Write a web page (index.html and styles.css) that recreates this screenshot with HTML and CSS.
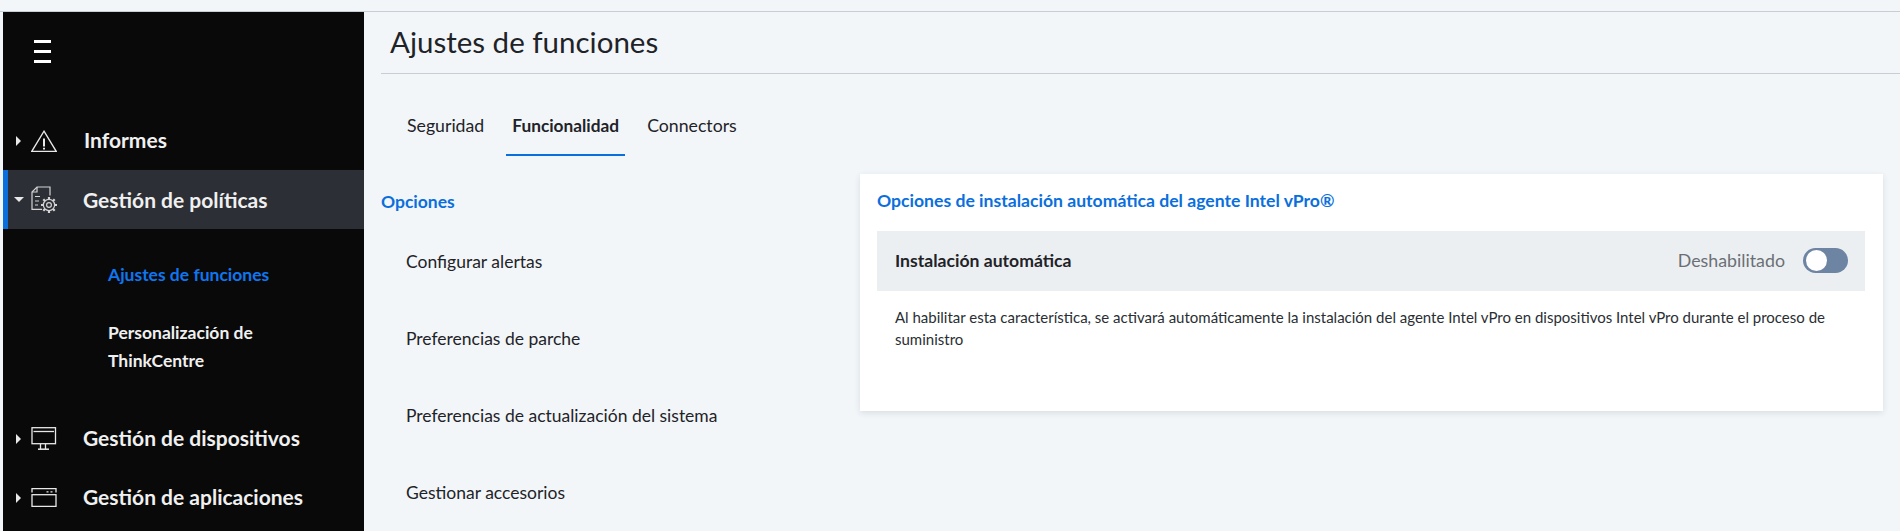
FILE: index.html
```html
<!DOCTYPE html>
<html lang="es">
<head>
  <meta charset="UTF-8">
  <title>Ajustes de funciones</title>
  <link rel="stylesheet" href="styles.css">
</head>
<body>
  <div class="topbar"></div>
  <div class="app">
    <!-- SIDEBAR -->
    <nav class="sidebar">
      <div class="burger"><span></span><span></span><span></span></div>

      <div class="nav-item nav-first">
        <span class="caret-right"></span>
        <svg class="nav-icon icon-alert" viewBox="0 0 26 22" fill="none" stroke="#e8e8e8" stroke-width="1.3">
          <path d="M13 1.200 L25.200 21.300 H0.800 Z"/>
          <path d="M13 8.500 V16.500" stroke-width="2"/>
          <path d="M13 17.800 V19.600" stroke-width="2"/>
        </svg>
        <span class="nav-label">Informes</span>
      </div>

      <div class="nav-item nav-active">
        <span class="caret-down"></span>
        <svg class="nav-icon icon-policy" viewBox="0 0 26 28" fill="none" stroke="#d4d4d4" stroke-width="1.2">
          <path d="M11 23.400 H1 V6 L6 1 H19 V9.500"/>
          <path d="M6 1 V6 H1"/>
          <path d="M4 10.500 H9 M4 15 H8 M4 19 H7"/>
          <circle cx="18" cy="19" r="2.400"/>
          <circle cx="18" cy="19" r="5.600"/>
          <path d="M18 11 V13.500 M18 24.500 V27 M10 19 H12.500 M23.500 19 H26 M12.300 13.300 L14 15 M22 23 L23.700 24.700 M23.700 13.300 L22 15 M14 23 L12.300 24.700" stroke-width="2.200"/>
        </svg>
        <span class="nav-label">Gestión de políticas</span>
      </div>

      <div class="subnav">
        <div class="sub-item sub-current">Ajustes de funciones</div>
        <div class="sub-item">Personalización de ThinkCentre</div>
      </div>

      <div class="nav-item nav-low">
        <span class="caret-right"></span>
        <svg class="nav-icon icon-device" viewBox="0 0 26 23" fill="none" stroke="#e8e8e8" stroke-width="1.300">
          <rect x="1" y="0.700" width="23.500" height="16"/>
          <path d="M2.500 4.500 H23"/>
          <path d="M9.500 17 V22 M14.500 17 V22" />
          <path d="M7 22.200 H18" stroke-width="1.500"/>
        </svg>
        <span class="nav-label">Gestión de dispositivos</span>
      </div>

      <div class="nav-item nav-low">
        <span class="caret-right"></span>
        <svg class="nav-icon icon-apps" viewBox="0 0 26 19" fill="none" stroke="#e8e8e8" stroke-width="1.300">
          <path d="M1 4.500 V0.700 H25 V4.500"/>
          <rect x="1" y="6.700" width="24" height="11.700"/>
          <path d="M15.500 3.800 H17.500 M19.500 3.800 H21.500"/>
        </svg>
        <span class="nav-label">Gestión de aplicaciones</span>
      </div>
    </nav>

    <!-- MAIN -->
    <main class="main">
      <h1 class="page-title">Ajustes de funciones</h1>

      <div class="tabs">
        <div class="tab">Seguridad</div>
        <div class="tab tab-active">Funcionalidad</div>
        <div class="tab">Connectors</div>
      </div>

      <div class="columns">
        <div class="options">
          <h2 class="options-title">Opciones</h2>
          <div class="option">Configurar alertas</div>
          <div class="option">Preferencias de parche</div>
          <div class="option">Preferencias de actualización del sistema</div>
          <div class="option">Gestionar accesorios</div>
        </div>

        <section class="card">
          <h2 class="card-title">Opciones de instalación automática del agente Intel vPro®</h2>
          <div class="setting-row">
            <span class="setting-name">Instalación automática</span>
            <span class="setting-state">Deshabilitado</span>
            <span class="switch"><span class="knob"></span></span>
          </div>
          <p class="setting-help">Al habilitar esta característica, se activará automáticamente la instalación del agente Intel vPro en dispositivos Intel vPro durante el proceso de suministro</p>
        </section>
      </div>
    </main>
  </div>
</body>
</html>
```

FILE: styles.css
```css
* { box-sizing: border-box; }
html, body {
  height: 531px;
  overflow: hidden;
}
body {
  margin: 0;
  background: #f2f6f9;
  color: #1f2328;
  font-family: 'Lato', sans-serif;
}
.topbar {
  height: 12px;
  border-bottom: 1px solid #c9ced6;
}
.app {
  display: flex;
  height: 519px;
  padding-left: 3px;
}
.sidebar {
  width: 361px;
  flex: none;
  background: #090909;
  color: #f0f0f0;
}
.burger {
  margin: 28px 0 0 31px;
  width: 17px;
  height: 23px;
  display: flex;
  flex-direction: column;
  justify-content: space-between;
}
.burger span {
  display: block;
  height: 3px;
  background: #fff;
}
.nav-item {
  display: flex;
  align-items: center;
  height: 59px;
  padding-left: 13px;
  font-size: 21px;
  font-weight: 700;
}
.nav-first { margin-top: 48px; }
.nav-active {
  background: #2c2f35;
  border-left: 5px solid #0a6fdc;
  padding-left: 6px;
}
.caret-right {
  flex: none;
  width: 0;
  height: 0;
  border-left: 5px solid #e8e8e8;
  border-top: 5px solid transparent;
  border-bottom: 5px solid transparent;
}
.caret-down {
  flex: none;
  width: 0;
  height: 0;
  margin-top: -1px;
  border-top: 5px solid #e8e8e8;
  border-left: 5px solid transparent;
  border-right: 5px solid transparent;
}
.nav-icon {
  flex: none;
  width: 26px;
  margin-left: 10px;
}
.icon-alert { height: 22px; }
.icon-policy {
  height: 28px;
  margin-left: 7px;
}
.icon-device { height: 23px; }
.icon-apps { height: 19px; }
.nav-label {
  margin-left: 27px;
  margin-top: -2px;
}
.nav-active .nav-label {
  margin-left: 26px;
  margin-top: 0;
}
.nav-low .nav-label { margin-left: 26px; }
.subnav {
  height: 180px;
  padding: 32px 60px 0 105px;
}
.sub-item {
  font-size: 17.5px;
  font-weight: 700;
  line-height: 28px;
  margin-bottom: 30px;
}
.sub-current { color: #0f76f0; }
.main {
  flex: 1;
  padding-left: 17px;
  min-width: 0;
}
.page-title {
  margin: 0;
  height: 62px;
  border-bottom: 1px solid #c9ced6;
  padding: 11px 0 0 9px;
  font-size: 29.5px;
  font-weight: 400;
  line-height: 38px;
}
.tabs {
  display: flex;
  gap: 16px;
  height: 82px;
  padding-left: 20px;
}
.tab {
  padding: 39px 6px 0;
  font-size: 17.7px;
  line-height: 26px;
}
.tab-active {
  font-size: 17.3px;
  font-weight: 700;
  border-bottom: 2px solid #0a6fdc;
}
.columns { display: flex; }
.options {
  width: 479px;
  flex: none;
}
.options-title {
  margin: 0 0 9px;
  padding-top: 34px;
  font-size: 17.5px;
  font-weight: 700;
  line-height: 24px;
  color: #0a6fdc;
}
.option {
  height: 77px;
  line-height: 77px;
  padding-left: 25px;
  font-size: 17.5px;
}
.card {
  width: 1023px;
  height: 237px;
  margin-top: 18px;
  background: #fff;
  box-shadow: 0 2px 6px rgba(30, 50, 70, 0.12);
  padding: 15px 18px 0 17px;
}
.card-title {
  margin: 0;
  font-size: 17.6px;
  font-weight: 700;
  line-height: 24px;
  color: #0a6fdc;
}
.setting-row {
  display: flex;
  align-items: center;
  height: 60px;
  margin-top: 18px;
  padding: 0 17px 2px 18px;
  background: #eceff2;
}
.setting-name {
  flex: 1;
  font-size: 17.6px;
  font-weight: 700;
}
.setting-state {
  font-size: 17.8px;
  color: #6b6f75;
  margin-right: 18px;
}
.switch {
  width: 45px;
  height: 25px;
  border-radius: 13px;
  background: #6d84a3;
  padding: 2px 3px;
}
.knob {
  display: block;
  width: 21px;
  height: 21px;
  border-radius: 50%;
  background: #fff;
}
.setting-help {
  margin: 0;
  padding: 15px 18px 0;
  font-size: 15px;
  line-height: 22px;
  color: #2a2e33;
}
```
